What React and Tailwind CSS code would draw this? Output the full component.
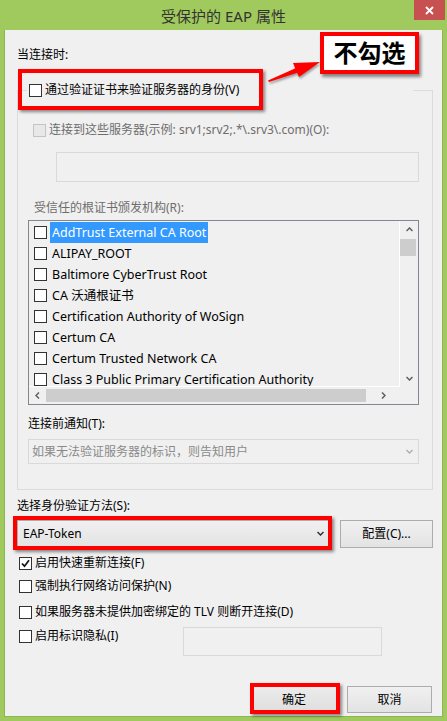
import React from 'react';

const certs = [
  'AddTrust External CA Root',
  'ALIPAY_ROOT',
  'Baltimore CyberTrust Root',
  'CA 沃通根证书',
  'Certification Authority of WoSign',
  'Certum CA',
  'Certum Trusted Network CA',
  'Class 3 Public Primary Certification Authority',
];

const Check = ({ checked, disabled }) => (
  <span
    className={
      disabled
        ? 'flex h-[13px] w-[13px] shrink-0 items-center justify-center border border-[#c4c4c4] bg-[#e8e8e8]'
        : 'flex h-[13px] w-[13px] shrink-0 items-center justify-center border border-[#333333] bg-white'
    }
  >
    {checked && (
      <svg width="9" height="9" viewBox="0 0 9 9">
        <path d="M1 4.5 L3.5 7.2 L8 1.2" fill="none" stroke="#111" strokeWidth="1.7" />
      </svg>
    )}
  </span>
);

// small scrollbar / combo chevrons
const Chevron = ({ dir, color = '#606060' }) => {
  const d = {
    up: 'M0.5 4 L3.5 1 L6.5 4',
    down: 'M0.5 1 L3.5 4 L6.5 1',
    left: 'M4 0.5 L1 3.5 L4 6.5',
    right: 'M1 0.5 L4 3.5 L1 6.5',
  }[dir];
  const vertical = dir === 'up' || dir === 'down';
  return (
    <svg width={vertical ? 7 : 5} height={vertical ? 5 : 7} viewBox={vertical ? '0 0 7 5' : '0 0 5 7'}>
      <path d={d} fill="none" stroke={color} strokeWidth="1.5" />
    </svg>
  );
};

const CheckRow = ({ label, checked, className }) => (
  <div className={'ml-[2px] flex h-[16px] items-center gap-[3px] ' + className}>
    <Check checked={checked} />
    <span>{label}</span>
  </div>
);

export default function App() {
  return (
    <div className="relative h-[721px] w-[447px] overflow-hidden bg-[#a0ca5e] font-['Noto_Sans','Noto_Sans_CJK_SC',sans-serif] text-[12px] leading-[16px] text-black">
      {/* title bar */}
      <div className="flex h-[30px] items-center justify-center pt-[2px] text-[15px] text-[#333333]">
        受保护的 EAP 属性
      </div>
      <div className="absolute right-[2px] top-0 flex h-[20px] w-[31px] items-center justify-center bg-[#c75050]">
        <svg width="9" height="9" viewBox="0 0 9 9">
          <path d="M1 1 L8 8 M8 1 L1 8" stroke="#fff" strokeWidth="1.8" />
        </svg>
      </div>

      {/* dialog body */}
      <div className="mx-[4px] h-[687px] border-x border-b border-[#8db552] bg-[#f0f0f0] pl-[12px]">
        <p className="pt-[17px]">当连接时:</p>

        <div className="mt-[27px] h-[400px] w-[416px] border border-[#dcdcdc]">
          <div className="-mt-[9px] ml-[9px] flex h-[16px] w-[386px] items-center gap-[3px] bg-[#f0f0f0] pl-[2px]">
            <Check />
            <span>通过验证证书来验证服务器的身份(V)</span>
          </div>

          <div className="ml-[15px] mt-[24px] flex h-[16px] items-center gap-[3px] text-[#6d6d6d]">
            <Check disabled />
            <span>连接到这些服务器(示例: srv1;srv2;.*\.srv3\.com)(O):</span>
          </div>

          <div className="ml-[38px] mt-[14px] h-[30px] w-[363px] border border-[#d9d9d9]" />

          <p className="ml-[16px] mt-[18px] text-[#6d6d6d]">受信任的根证书颁发机构(R):</p>

          <div className="ml-[10px] mt-[4px] flex h-[185px] w-[391px] flex-col border border-[#828790]">
            <div className="flex h-[166px]">
              <div className="w-[371px] overflow-hidden border-b border-r border-white pt-[1px] text-[12.5px]">
                {certs.map((c, i) => (
                  <div key={c} className="flex h-[21px] shrink-0 items-center pl-[5px]">
                    <Check />
                    <span
                      className={
                        i === 0
                          ? 'ml-[3px] flex h-[21px] items-center whitespace-nowrap bg-[#3399ff] px-[2px] text-white'
                          : 'ml-[3px] flex h-[21px] items-center whitespace-nowrap px-[2px]'
                      }
                    >
                      {c}
                    </span>
                  </div>
                ))}
              </div>
              <div className="flex w-[18px] flex-col">
                <div className="flex h-[17px] items-center justify-center">
                  <Chevron dir="up" />
                </div>
                <div className="mt-px h-[17px] w-[16px] bg-[#cdcdcd]" />
                <div className="flex-1" />
                <div className="flex h-[17px] items-center justify-center">
                  <Chevron dir="down" />
                </div>
              </div>
            </div>
            <div className="flex h-[17px] items-center">
              <div className="flex w-[17px] justify-center">
                <Chevron dir="left" />
              </div>
              <div className="h-[13px] w-[320px] bg-[#cdcdcd]" />
              <div className="flex w-[34px] justify-center">
                <Chevron dir="right" />
              </div>
            </div>
          </div>

          <p className="ml-[10px] mt-[11px]">连接前通知(T):</p>

          <div className="ml-[10px] mt-[7px] flex h-[25px] w-[391px] items-center justify-between border border-[#d9d9d9] pl-[3px] pr-[5px] text-[#8a8a8a]">
            <span>如果无法验证服务器的标识，则告知用户</span>
            <Chevron dir="down" color="#b0b0b0" />
          </div>
        </div>

        <p className="mt-[8px]">选择身份验证方法(S):</p>

        <div className="mt-[6px] flex">
          <div className="flex h-[27px] w-[313px] items-center justify-between border border-[#acacac] bg-gradient-to-b from-[#f0f0f0] to-[#e3e3e3] pl-[5px] pr-[5px]">
            <span>EAP-Token</span>
            <Chevron dir="down" color="#333333" />
          </div>
          <button className="ml-[10px] flex h-[28px] w-[93px] items-center justify-center border border-[#acacac] bg-gradient-to-b from-[#f0f0f0] to-[#e3e3e3]">
            配置(C)...
          </button>
        </div>

        <CheckRow className="mt-[7px]" checked label="启用快速重新连接(F)" />
        <CheckRow className="mt-[7px]" label="强制执行网络访问保护(N)" />
        <CheckRow className="mt-[10px]" label="如果服务器未提供加密绑定的 TLV 则断开连接(D)" />

        <div className="mt-[8px] flex items-start">
          <CheckRow className="w-[164px]" label="启用标识隐私(I)" />
          <div className="-mt-px h-[29px] w-[199px] border border-[#d9d9d9]" />
        </div>

        <div className="mt-[30px] flex justify-end gap-[10px] pr-[10px]">
          <button className="flex h-[27px] w-[86px] items-center justify-center border border-[#3c7fb1] bg-gradient-to-b from-[#ececec] to-[#dedede]">
            确定
          </button>
          <button className="flex h-[27px] w-[85px] items-center justify-center border border-[#acacac] bg-gradient-to-b from-[#f0f0f0] to-[#e3e3e3]">
            取消
          </button>
        </div>
      </div>

      {/* annotations laid over the dialog */}
      <div className="absolute left-[18px] top-[69px] h-[41px] w-[245px] border-4 border-[#ff0000] shadow-[2px_2px_3px_rgba(0,0,0,0.45)]" />
      <div className="absolute left-[13px] top-[516px] h-[34px] w-[319px] border-4 border-[#ff0000] shadow-[2px_2px_3px_rgba(0,0,0,0.45)]" />
      <div className="absolute left-[250px] top-[683px] h-[31px] w-[90px] border-4 border-[#ff0000] shadow-[2px_2px_3px_rgba(0,0,0,0.45)]" />

      <svg className="absolute left-0 top-0" width="447" height="721" viewBox="0 0 447 721">
        <g fill="#ff0000" style={{ filter: 'drop-shadow(1px 2px 1px rgba(0,0,0,0.35))' }}>
          <polygon points="268,80.5 269,82 298,72.5 296,68" />
          <polygon points="320,62 293,63 299,77" />
        </g>
      </svg>

      <div className="absolute left-[320px] top-[32px] flex h-[42px] w-[99px] items-center justify-center border-4 border-[#ff0000] bg-white pb-[1px] text-[24px] font-bold leading-none text-black shadow-[2px_3px_3px_rgba(0,0,0,0.45)]">
        不勾选
      </div>
    </div>
  );
}
